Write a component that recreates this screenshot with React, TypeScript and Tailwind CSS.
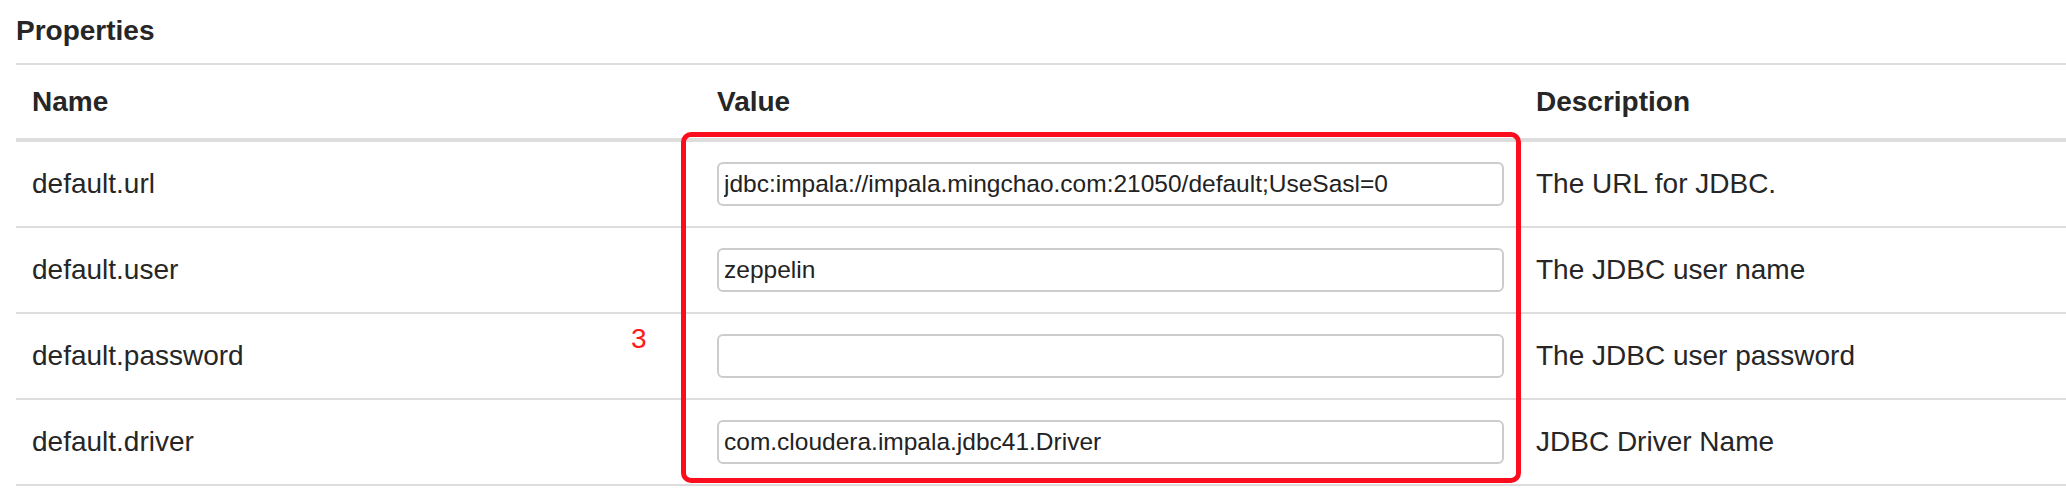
import React from 'react';

// --- Types ---
interface Property {
  name: string;
  value: string;
  description: string;
}

const properties: Property[] = [
  { name: 'default.url', value: 'jdbc:impala://impala.mingchao.com:21050/default;UseSasl=0', description: 'The URL for JDBC.' },
  { name: 'default.user', value: 'zeppelin', description: 'The JDBC user name' },
  { name: 'default.password', value: '', description: 'The JDBC user password' },
  { name: 'default.driver', value: 'com.cloudera.impala.jdbc41.Driver', description: 'JDBC Driver Name' },
];

export default function App() {
  return (
    <div className="relative w-[2066px] h-[492px] overflow-hidden bg-white text-[#262626] font-['Liberation_Sans',Arial,sans-serif]">
      {/* --- Heading --- */}
      <h3 className="pl-[16px] pt-[15px] pb-[16px] text-[28px] leading-[32px] font-bold">Properties</h3>

      {/* --- Table --- */}
      <div className="ml-[16px] border-t-2 border-[#ddd]">
        <div className="grid grid-cols-[685px_819px_1fr] border-b-4 border-[#ddd] text-[28px] leading-[32px] font-bold">
          <div className="pl-[16px] pt-[21px] pb-[20px]">Name</div>
          <div className="pl-[16px] pt-[21px] pb-[20px]">Value</div>
          <div className="pl-[16px] pt-[21px] pb-[20px]">Description</div>
        </div>
        {properties.map((p) => (
          <div key={p.name} className="grid grid-cols-[685px_819px_1fr] h-[86px] border-b-2 border-[#ddd] items-center text-[28px] leading-[32px]">
            <div className="pl-[16px]">{p.name}</div>
            <div className="px-[16px]">
              <input
                type="text"
                readOnly
                value={p.value}
                className="w-full h-[44px] px-[5px] border-2 border-[#ccc] rounded-[6px] bg-white text-[24.5px] text-[#222] outline-none font-['Liberation_Sans',Arial,sans-serif]"
              />
            </div>
            <div className="pl-[16px]">{p.description}</div>
          </div>
        ))}
      </div>

      {/* --- Annotation overlay --- */}
      <div className="absolute left-[681px] top-[132px] w-[840px] h-[351px] border-[5px] border-[#fc0d1e] rounded-[10px] pointer-events-none" />
      <span className="absolute left-[631px] top-[323px] text-[28px] leading-[32px] text-[#ff1a1a]">3</span>
    </div>
  );
}
